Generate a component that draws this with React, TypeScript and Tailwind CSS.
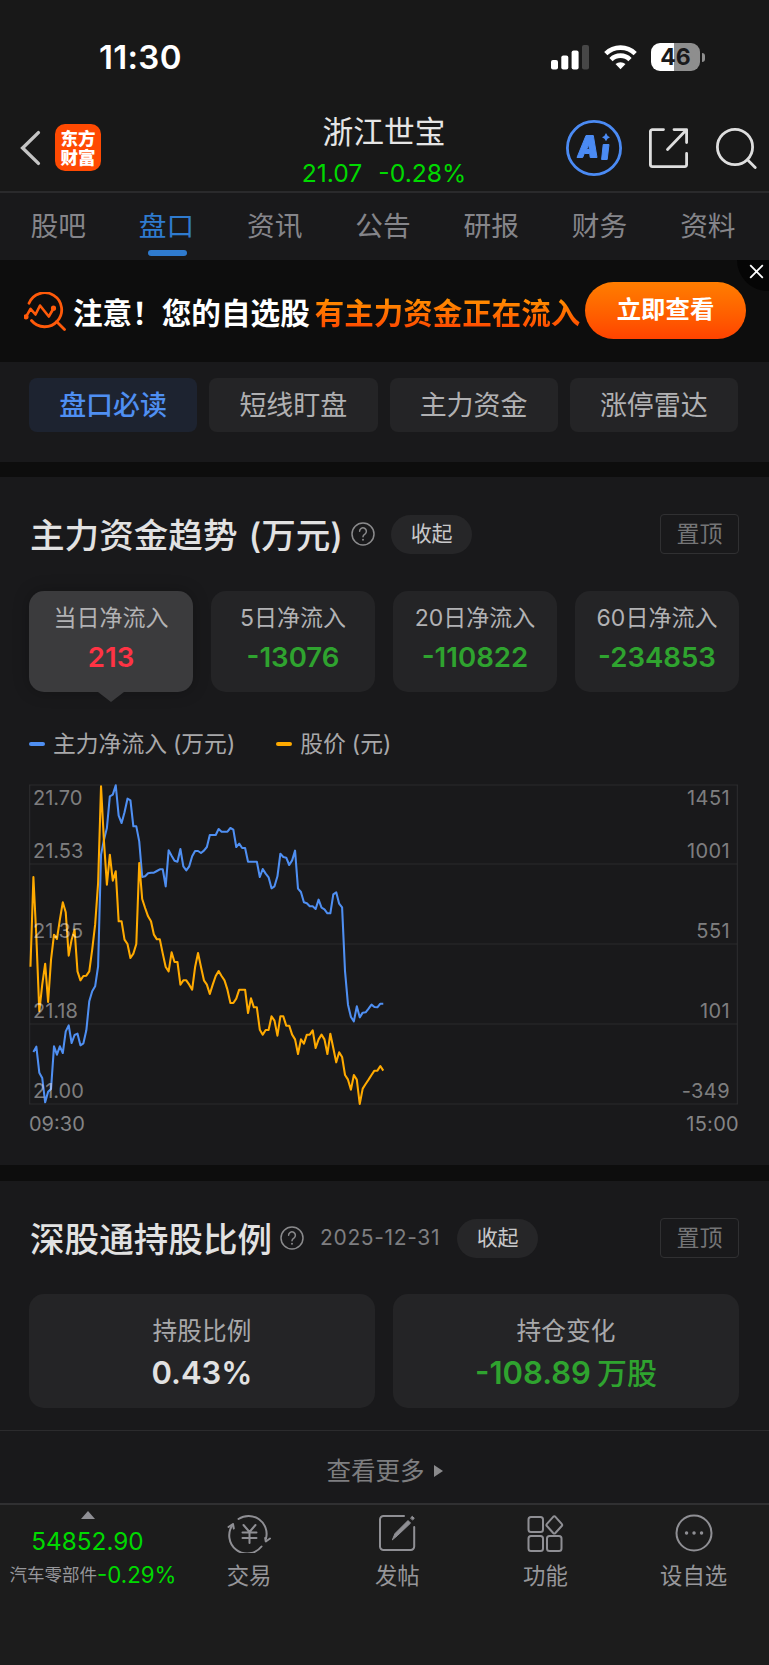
import { ReactNode } from "react";
import clsx from "clsx";

// one value per minute, 09:30 - 11:30, in chart units (0 = top, 957 = bottom)
const FLOW = [
  801, 785, 863, 879, 952, 920, 912, 784, 809, 784, 804, 739, 721, 774, 750, 746, 781, 775, 736, 649,
  619, 604, 544, 209, 164, 129, 34, 29, 1, 92, 114, 82, 41, 46, 124, 124, 169, 276, 274, 265,
  263, 263, 258, 253, 253, 304, 196, 212, 227, 230, 192, 244, 256, 244, 214, 198, 198, 204, 197, 186,
  150, 150, 150, 132, 140, 140, 140, 129, 134, 186, 176, 189, 189, 230, 230, 230, 230, 276, 252, 266,
  277, 310, 304, 274, 206, 216, 218, 240, 226, 197, 311, 321, 352, 355, 364, 364, 372, 344, 368, 373,
  385, 385, 328, 322, 356, 367, 559, 659, 696, 709, 664, 697, 683, 682, 671, 659, 666, 667, 656, 656,
];

const PRICE = [
  545, 276, 454, 679, 599, 536, 651, 524, 449, 462, 404, 352, 382, 512, 464, 434, 559, 586, 573, 572,
  559, 494, 419, 294, 4, 169, 299, 209, 287, 259, 409, 409, 464, 477, 519, 506, 477, 234, 342, 369,
  394, 409, 449, 463, 463, 506, 546, 559, 502, 531, 531, 599, 586, 586, 599, 614, 546, 504, 546, 586,
  599, 627, 599, 573, 558, 573, 586, 614, 654, 654, 641, 614, 614, 614, 684, 640, 667, 667, 734, 749,
  735, 735, 694, 707, 752, 694, 694, 722, 722, 749, 763, 807, 763, 776, 749, 749, 736, 789, 763, 749,
  763, 807, 746, 789, 832, 802, 816, 870, 884, 914, 870, 884, 957, 911, 897, 884, 870, 857, 857, 843,
  857,
];

const toPoints = (data: number[], start: number) =>
  data.map((v, i) => `${(4.4 + (i + start) * 8.82).toFixed(1)},${v}`).join(" ");

const tabs = ["股吧", "盘口", "资讯", "公告", "研报", "财务", "资料"];
const chips = ["盘口必读", "短线盯盘", "主力资金", "涨停雷达"];

const flows = [
  { label: "当日净流入", value: "213" },
  { label: "5日净流入", value: "-13076" },
  { label: "20日净流入", value: "-110822" },
  { label: "60日净流入", value: "-234853" },
];

const axis = [
  { left: "21.70", right: "1451", top: "top-[0px]" },
  { left: "21.53", right: "1001", top: "top-[53px]" },
  { left: "21.35", right: "551", top: "top-[133px]" },
  { left: "21.18", right: "101", top: "top-[213px]" },
  { left: "21.00", right: "-349", top: "top-[293px]" },
];

function StatusBar() {
  return (
    <div className="flex h-[100px] items-start justify-between pl-[99px] pr-[64px] text-white">
      <span className="mt-[37px] text-[33px] leading-[40px] font-semibold tracking-[0.3px]">11:30</span>
      <div className="mt-[43px] flex h-7 items-center">
        <svg width="39" height="26" viewBox="0 0 39 26" fill="#fff">
          <rect x="0" y="16" width="7" height="9.5" rx="2" />
          <rect x="10.3" y="11.5" width="7" height="14" rx="2" />
          <rect x="20.6" y="6.5" width="7" height="19" rx="2" />
          <rect x="31" y="1" width="7" height="24.5" rx="2" fill="#474747" />
        </svg>
        <svg className="ml-[14px]" width="33" height="26" viewBox="0 0 33 26" fill="none" stroke="#fff" strokeWidth="4.6">
          <path d="M1.8 9.6a21 21 0 0 1 29.4 0" />
          <path d="M7 15.6a13.4 13.4 0 0 1 19 0" />
          <path d="M16.5 25.3l-5-5.2a7.4 7.4 0 0 1 10 0z" fill="#fff" stroke="none" />
        </svg>
        <div className="ml-[14px] flex h-7 w-[49px] items-center justify-center rounded-[9px] bg-linear-to-r from-white from-[47%] to-[#8e8e8e] to-[47%] text-[23px] leading-7 font-bold text-[#19191b]">
          46
        </div>
        <div className="ml-[2px] h-[9px] w-[3px] rounded-r-full bg-[#8e8e8e]" />
      </div>
    </div>
  );
}

function Header() {
  return (
    <div className="grid h-[93px] grid-cols-[1fr_auto_1fr] items-start border-b-2 border-[#2a2a2c]">
      <div className="flex items-center pt-[24px] pl-[20px]">
        <svg width="21" height="36" viewBox="0 0 21 36" fill="none" stroke="#c4c4c4" strokeWidth="3.4" strokeLinecap="round">
          <path d="M18.4 2.6L2.6 18l15.8 15.4" />
        </svg>
        <div className="ml-[14px] flex h-[47px] w-[46px] flex-col items-center justify-center rounded-[10px] bg-[#ff4a02] text-[17.5px] leading-[19px] font-black text-white">
          <span>东方</span>
          <span>财富</span>
        </div>
      </div>
      <div className="flex flex-col items-center pr-px">
        <h1 className="mt-[12px] text-[30.7px] leading-[40px] text-[#e6e6e6]">浙江世宝</h1>
        <div className="mt-[6px] flex gap-[16px] text-[24.7px] leading-[30px] text-[#00d900]">
          <span>21.07</span>
          <span>-0.28%</span>
        </div>
      </div>
      <div className="flex items-center justify-end pt-[20px] pr-[12px]">
        <svg width="56" height="56" viewBox="0 0 56 56" fill="#4b8bf4" stroke="#4b8bf4" strokeLinejoin="round">
          <circle cx="28" cy="28" r="26.6" fill="none" strokeWidth="2.8" />
          <path d="M20 15.500h7.300l3.700 22h-6.800l-.5-4h-5.400l-1.600 4H11zM22.600 24.500l-1.900 5h2.700z" fillRule="evenodd" strokeWidth="1" />
          <path d="M37.200 24.500h5.800L41.200 39.500H35.600z" strokeWidth="1" />
          <path d="M40 13q1 3.200 4 4.200q-3 1-4 4.100q-1-3.100-4-4.100q3-1 4-4.200z" stroke="none" />
        </svg>
        <svg className="ml-[27px]" width="39" height="40" viewBox="0 0 39 40" fill="none" stroke="#dedede" strokeWidth="2.8" strokeLinecap="round" strokeLinejoin="round">
          <path d="M14.5 1.6H3.4a2 2 0 0 0-2 2v33a2 2 0 0 0 2 2h32.2a2 2 0 0 0 2-2V25.5" />
          <path d="M25 1.6h12.6v13M37 2.2L18.5 21.5" />
        </svg>
        <svg className="ml-[28px]" width="41" height="41" viewBox="0 0 41 41" fill="none" stroke="#dedede" strokeWidth="2.8" strokeLinecap="round">
          <circle cx="19" cy="19" r="17.6" />
          <path d="M31.5 31.8l7.7 7.6" />
        </svg>
      </div>
    </div>
  );
}

function Banner() {
  return (
    <div className="relative flex h-[102px] items-center overflow-hidden bg-[#0d0d0d] pl-[24px]">
      <svg width="42" height="39" viewBox="0 0 42 39" fill="none" stroke="#ff5a0a" strokeWidth="2.8" strokeLinecap="round" strokeLinejoin="round">
        <path d="M5 11.2A17 17 0 1 1 7.5 28.5M32.5 29.5l8 8" />
        <path d="M2 24.8l4.500-8 5 5.700 4.500-9 8.800 11 4.700-8" strokeWidth="2.6" />
        <circle cx="2" cy="24.8" r="1.2" />
        <circle cx="29.5" cy="16.2" r="1.2" />
      </svg>
      <span className="mt-[3px] ml-[7px] text-[29.6px] leading-[40px] font-bold whitespace-nowrap text-white">注意！您的自选股</span>
      <span className="mt-[3px] ml-[5px] bg-linear-to-b from-[#ff8a00] from-20% to-[#ff4a00] to-85% bg-clip-text text-[29.5px] leading-[40px] font-bold whitespace-nowrap text-transparent">
        有主力资金正在流入
      </span>
      <button className="absolute top-[22px] left-[585px] h-[57px] w-[161px] rounded-full bg-linear-to-b from-[#ff7d00] to-[#ff4200] pb-[2px] text-[24.4px] font-bold text-white">
        立即查看
      </button>
      <div className="absolute top-0 right-0 h-[31px] w-[32px] rounded-bl-full bg-[#050505]" />
      <svg className="absolute top-[4px] right-[5px]" width="15" height="15" viewBox="0 0 15 15" stroke="#fff" strokeWidth="1.8">
        <path d="M1.2 1.2l12.6 12.6M13.8 1.2L1.2 13.8" />
      </svg>
    </div>
  );
}

function SectionTitle({ title, date }: { title: ReactNode; date?: string }) {
  return (
    <div className="flex h-10 items-center">
      <h2 className="mt-[2px] ml-px text-[34.6px] leading-[40px] font-medium whitespace-nowrap text-[#e2e2e2]">{title}</h2>
      <svg className="ml-[8px] shrink-0" width="24" height="24" viewBox="0 0 24 24" fill="none" stroke="#8a8a8c" strokeWidth="1.5" strokeLinecap="round">
        <circle cx="12" cy="12" r="11" />
        <path d="M8.6 9.3a3.4 3.4 0 1 1 5.300 2.800q-1.900 1.200-1.900 2.700" />
        <path d="M12 17.6v.1" strokeWidth="1.9" />
      </svg>
      {date && <span className="ml-[16px] text-[21px] tracking-[0.65px] text-[#7e7e80]">{date}</span>}
      <button className={clsx("h-[39px] w-[81px] rounded-full bg-[#262628] text-[21px] text-[#c8c8ca]", date ? "ml-[17px]" : "ml-[16px]")}>
        收起
      </button>
      <button className="ml-auto h-10 w-[79px] rounded-[4px] border border-[#303032] text-[23px] text-[#757577]">置顶</button>
    </div>
  );
}

function FlowChart() {
  return (
    <div className="relative mt-[26px] h-[320px] w-[710px]">
      <svg className="block overflow-visible" width="710" height="320" viewBox="0 0 2130 960" fill="none" strokeLinejoin="round">
        <path d="M0 0H2127M0 237H2127M0 477H2127M0 717H2127M0 957H2127M2 0V957M2125 0V957" stroke="#2b2b2d" strokeWidth="3.5" />
        <polyline points={toPoints(FLOW, 1)} stroke="#4f8ff2" strokeWidth="6.2" />
        <polyline points={toPoints(PRICE, 0)} stroke="#ffaa00" strokeWidth="6.2" />
      </svg>
      {axis.map((row) => (
        <div key={row.left} className={clsx("absolute inset-x-0 flex justify-between pr-[9px] pl-[4px] text-[20px] leading-[26px] text-white/45", row.top)}>
          <span>{row.left}</span>
          <span className="tracking-[0.4px]">{row.right}</span>
        </div>
      ))}
    </div>
  );
}

function Dash({ className }: { className: string }) {
  return <span className={clsx("h-1 w-4 rounded-full", className)} />;
}

function NavItem({ label, children }: { label: string; children: ReactNode }) {
  return (
    <div className="flex w-[148.2px] flex-col items-center pt-[8px] text-[22.4px] leading-[30px] text-[#96969a]">
      <svg width="44" height="40" viewBox="0 0 44 40" fill="none" stroke="#8f8f94" strokeWidth="2" strokeLinecap="round" strokeLinejoin="round">
        {children}
      </svg>
      <span className="mt-[8px]">{label}</span>
    </div>
  );
}

export default function App() {
  return (
    <div className="min-h-[1665px] w-[769px] overflow-hidden bg-[#19191b] font-['Inter','Noto_Sans_CJK_SC',sans-serif]">
      <div className="bg-[#181818]">
        <StatusBar />
        <Header />
      </div>

      {/* TABS */}
      <div className="flex h-[67px] pr-[7px] pl-[4px]">
        {tabs.map((t) => (
          <div key={t} className={clsx("flex flex-1 flex-col items-center text-[27.7px]", t === "盘口" ? "text-[#2f7bcf]" : "text-[#85858a]")}>
            <span className="mt-[13px] leading-[40px]">{t}</span>
            {t === "盘口" && <span className="mt-[4px] ml-[2px] h-[6px] w-[39px] rounded-full bg-[#2f7bcf]" />}
          </div>
        ))}
      </div>

      <Banner />

      {/* CHIPS */}
      <div className="flex h-[100px] gap-[12px] pr-[31px] pl-[29px] pt-[16px]">
        {chips.map((c, i) => (
          <div
            key={c}
            className={clsx(
              "flex h-[54px] flex-1 items-center justify-center rounded-lg pt-[3px] text-[27px]",
              i === 0 ? "bg-[#1d2330] font-medium text-[#4f8ff2]" : "bg-[#242426] text-[#b0b0b2]"
            )}
          >
            {c}
          </div>
        ))}
      </div>

      {/* MAIN FUNDS */}
      <section className="h-[703px] border-t-[15px] border-[#0d0d0d] pr-[30px] pl-[29px] pt-[37px]">
        <SectionTitle title={<>主力资金趋势<span className="ml-[11px]">(万元)</span></>} />
        <div className="mt-[37px] grid grid-cols-4 gap-[18px]">
          {flows.map((f, i) => (
            <div key={f.label} className={clsx("relative flex h-[101px] flex-col items-center rounded-[15px]", i === 0 ? "bg-[#3b3b3d] shadow-[0_0_16px_rgba(0,0,0,0.25)]" : "bg-[#242426]")}>
              <span className="mt-[12px] text-[23px] leading-[30px] whitespace-nowrap text-[#b2b2b4]">{f.label}</span>
              <span className={clsx("mt-[8px] text-[27.6px] leading-[32px] font-semibold", i === 0 ? "text-[#ff3344]" : "text-[#2fa32f]")}>{f.value}</span>
              {i === 0 && (
                <svg className="absolute top-full" width="26" height="10" viewBox="0 0 26 10">
                  <path d="M0 0h26L13 10z" fill="#3b3b3d" />
                </svg>
              )}
            </div>
          ))}
        </div>
        <div className="mt-[37px] flex h-[30px] items-center text-[22.8px] leading-[30px] whitespace-nowrap text-[#a8a8aa]">
          <Dash className="bg-[#4f8ff2]" />
          <span className="ml-[8px]">主力净流入<span className="ml-[6px]">(万元)</span></span>
          <Dash className="ml-[41px] bg-[#ffaa00]" />
          <span className="ml-[8px]">股价<span className="ml-[6px]">(元)</span></span>
        </div>
        <FlowChart />
        <div className="flex justify-between pt-[6px] text-[20px] leading-[26px] text-[#848486]">
          <span>09:30</span>
          <span className="tracking-[0.3px]">15:00</span>
        </div>
      </section>

      {/* SHENZHEN CONNECT */}
      <section className="h-[265px] border-t-[16px] border-[#0d0d0d] pr-[30px] pl-[29px] pt-[37px]">
        <SectionTitle title="深股通持股比例" date="2025-12-31" />
        <div className="mt-[36px] grid grid-cols-2 gap-[18px] text-center">
          <div className="h-[114px] rounded-[15px] bg-[#242426] pt-[20px]">
            <p className="text-[24.7px] leading-[34px] text-[#a8a8aa]">持股比例</p>
            <p className="mt-[6px] text-[31px] leading-[38px] font-semibold text-[#e2e2e2]">0.43%</p>
          </div>
          <div className="h-[114px] rounded-[15px] bg-[#242426] pt-[20px]">
            <p className="text-[24.7px] leading-[34px] text-[#a8a8aa]">持仓变化</p>
            <p className="mt-[6px] text-[31px] leading-[38px] font-semibold text-[#2fa32f]">
              -108.89<span className="ml-[6px] text-[30px] font-medium">万股</span>
            </p>
          </div>
        </div>
      </section>
      <div className="flex h-[73px] items-center justify-center border-t border-[#2b2b2d] pt-[8px] text-[24.5px] text-[#7e7e80]">
        查看更多
        <svg className="ml-[9px]" width="9" height="12" viewBox="0 0 9 12">
          <path d="M0 0l9 6-9 6z" fill="#8a8a8c" />
        </svg>
      </div>

      {/* BOTTOM BAR */}
      <nav className="flex h-[162px] border-t-2 border-[#303032] bg-[#1c1c1c]">
        <div className="flex w-[175px] flex-col items-center">
          <svg className="mt-[6px]" width="14" height="8" viewBox="0 0 14 8">
            <path d="M7 0l7 8H0z" fill="#8f8f94" />
          </svg>
          <span className="mt-[7px] text-[24.3px] leading-[30px] text-[#00d900]">54852.90</span>
          <span className="mt-[4px] ml-[11px] flex text-[17.5px] leading-[30px] whitespace-nowrap text-[#96969a]">
            汽车零部件<span className="text-[22.3px] text-[#00d900]">-0.29%</span>
          </span>
        </div>
        <NavItem label="交易">
          <path d="M11.5 6A18 18 0 0 1 39 25.5M34.5 33.5A18 18 0 0 1 6 11.5" />
          <path d="M1.5 14L6 11l.8 4.5M43 25.5L38.8 28.5l-.6-3.5" />
          <path d="M16.5 12l6 7 6-7M15.5 19.500h14M15.500 25h14M22.500 19v11" />
        </NavItem>
        <NavItem label="发帖">
          <path d="M29 3H8.500a3.500 3.500 0 0 0-3.500 3.500v27A3.500 3.500 0 0 0 8.500 37h27.200a3.500 3.500 0 0 0 3.500-3.500V14" />
          <path d="M17.500 26.500l2.500-6L33 7.500l2.600 2.600L22.500 22.500zM35.800 4.700l1.500-1.400 2 2-1.500 1.500z" fill="#8f8f94" strokeWidth="1" />
        </NavItem>
        <NavItem label="功能">
          <rect x="5.5" y="4" width="14.5" height="15" rx="2.5" />
          <rect x="5.5" y="23" width="14.5" height="15" rx="2.5" />
          <rect x="24" y="23" width="14.5" height="15" rx="2.5" />
          <path d="M30.200 3.800q1.100-1.100 2.200 0l6.300 7q1 1.100 0 2.200l-6.300 7q-1.100 1.100-2.200 0l-6.300-7q-1-1.100 0-2.200z" />
        </NavItem>
        <NavItem label="设自选">
          <circle cx="22" cy="20" r="17.5" />
          <path d="M14.500 20h.1M22 20h.1M29.500 20h.1" strokeWidth="3.4" />
        </NavItem>
      </nav>
    </div>
  );
}
